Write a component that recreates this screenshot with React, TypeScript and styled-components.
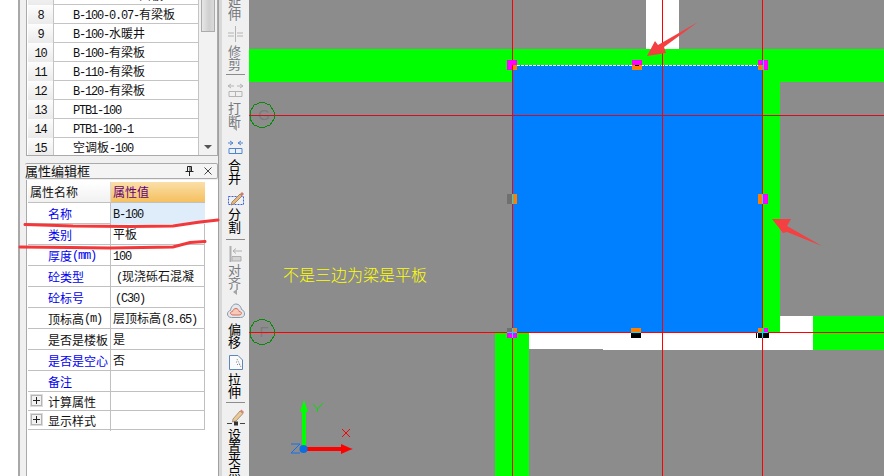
import React from "react";
import styled, { createGlobalStyle } from "styled-components";

const GlobalStyle = createGlobalStyle`
  html, body {
    margin: 0;
    padding: 0;
    background: #fff;
  }
`;

const CJK = `"Noto Sans CJK SC", "Liberation Sans", sans-serif`;

const Page = styled.div`
  position: relative;
  display: flex;
  width: 884px;
  height: 476px;
  overflow: hidden;
  background: #fff;
  font-family: ${CJK};
  font-size: 12px;
  color: #111;
`;

const Gutter = styled.div`
  width: 18px;
  flex: none;
`;

const Panel = styled.div`
  width: 201px;
  flex: none;
  box-sizing: border-box;
  display: flex;
  flex-direction: column;
  padding-left: 5px;
  background: #f0f0f0;
  border-left: 2px solid #a8a8a8;
  border-right: 1px solid #a0a0a0;
`;

const ListBox = styled.div`
  height: 156px;
  flex: none;
  box-sizing: border-box;
  margin-left: 1px;
  padding-left: 1px;
  display: flex;
  overflow: hidden;
  background: #fff;
  border-left: 1px solid #aaa;
  border-right: 1px solid #aaa;
  border-bottom: 1px solid #aaa;
`;

const ListRows = styled.div`
  flex: 1;
  margin-top: -14px;
`;

const ListRow = styled.div`
  display: grid;
  grid-template-columns: 26px 1fr;
  height: 19px;
  box-sizing: border-box;
  border-bottom: 1px solid #c4c4c4;
  border-right: 1px solid #c4c4c4;
  line-height: 18px;
`;

const RowNumber = styled.div`
  text-align: center;
  background: linear-gradient(#fdfdfd, #e9e9e9);
  border-right: 1px solid #c4c4c4;
`;

const RowName = styled.div`
  padding-left: 19px;
  white-space: nowrap;
`;

const Scrollbar = styled.div`
  position: relative;
  width: 18px;
  flex: none;
  background: #f2f2f2;
`;

const ScrollThumb = styled.div`
  width: 14px;
  height: 32px;
  margin-left: 2px;
  box-sizing: border-box;
  background: linear-gradient(90deg, #e6e6e6, #cfcfcf 60%, #dadada);
  border: 1px solid #ababab;
  border-top: none;
`;

const ScrollArrow = styled.div`
  position: absolute;
  left: 5px;
  bottom: 6px;
  width: 0;
  height: 0;
  border-left: 4px solid transparent;
  border-right: 4px solid transparent;
  border-top: 4px solid #555;
`;

const TitleBar = styled.div`
  height: 16px;
  flex: none;
  box-sizing: border-box;
  margin-top: 7px;
  display: flex;
  align-items: center;
  justify-content: space-between;
  padding-right: 5px;
  background: #f4f4f4;
  border: 1px solid #aaa;
  border-left: none;
  border-radius: 2px;
  font-size: 13px;
  line-height: 14px;
`;

const TitleIcons = styled.div`
  display: flex;
  align-items: center;
  gap: 10px;
`;

const PropertyBox = styled.div`
  flex: 1;
  margin-top: 1px;
  margin-left: 1px;
  padding: 2px 0 0 1px;
  background: #fff;
  border-left: 1px solid #aaa;
`;

const PropertyTable = styled.div`
  width: 177px;
`;

const PropertyRow = styled.div<{ $height?: number }>`
  display: grid;
  grid-template-columns: 83px 94px;
  height: ${(p) => p.$height ?? 21}px;
  box-sizing: border-box;
  border-bottom: 1px solid #c0c0c0;
  border-right: 1px solid #c0c0c0;
  line-height: 20px;
`;

const HeaderName = styled.div`
  padding-left: 2px;
  background: linear-gradient(#fff, #f1f1f1);
  border-right: 1px solid #d8d8d8;
`;

const HeaderValue = styled.div`
  padding-left: 2px;
  background: linear-gradient(#fbdfa9, #f5c05f);
  color: #64007c;
`;

const NameCell = styled.div<{ $link?: boolean; $group?: boolean }>`
  display: flex;
  align-items: center;
  padding: ${(p) => (p.$group ? 0 : 1)}px 0 0 20px;
  position: relative;
  white-space: nowrap;
  color: ${(p) => (p.$link ? "#0000f0" : "#111")};
  border-right: 1px solid #c0c0c0;
`;

const ValueCell = styled.div<{ $selected?: boolean; $indent?: number }>`
  padding-left: ${(p) => p.$indent ?? 2}px;
  white-space: nowrap;
  overflow: hidden;
  background: ${(p) => (p.$selected ? "#dfedfb" : "transparent")};
`;

const PlusBox = styled.div`
  position: absolute;
  left: 3px;
  top: 3px;
  width: 11px;
  height: 11px;
  box-sizing: border-box;
  display: flex;
  align-items: center;
  justify-content: center;
  background: #f2f2f2;
  border: 1px solid #b4b4b4;
  outline: 1px solid #dcdcdc;
`;

const Divider = styled.div`
  width: 3px;
  flex: none;
  background: #d8d8d8;
`;

const Toolbar = styled.div`
  width: 27px;
  flex: none;
  display: flex;
  flex-direction: column;
  align-items: center;
  background: #f0f0f0;
  overflow: hidden;
`;

const ToolButton = styled.div<{ $pad: number; $gap: number; $off?: boolean; $first?: boolean }>`
  flex: none;
  display: flex;
  flex-direction: column;
  align-items: center;
  margin-top: ${(p) => (p.$first ? -6 : 0)}px;
  padding-top: ${(p) => p.$pad}px;
  gap: ${(p) => p.$gap}px;
  color: ${(p) => (p.$off ? "#76797e" : "#000")};
`;

const ToolLabel = styled.div<{ $pitch?: number }>`
  width: 13px;
  margin-right: 2px;
  font-size: 13px;
  line-height: ${(p) => p.$pitch ?? 13}px;
  text-align: center;
  word-break: break-all;
`;

const ToolSeparator = styled.div<{ $top: number }>`
  flex: none;
  width: 19px;
  height: 1px;
  margin-top: ${(p) => p.$top}px;
  background: #8c8c8c;
`;

const MoreArrow = styled.div<{ $lift?: number }>`
  flex: none;
  width: 0;
  height: 0;
  margin-top: ${(p) => -(p.$lift ?? 0)}px;
  margin-right: 2px;
  border-top: 3px solid transparent;
  border-bottom: 3px solid transparent;
  border-right: 4px solid #a4a4a4;
`;

const Canvas = styled.div`
  flex: 1;
  background: #8c8c8c;
  overflow: hidden;
`;

const Drawing = styled.svg`
  display: block;
`;

const CanvasNote = styled.text`
  font-family: ${CJK};
  font-size: 16px;
  font-weight: 300;
  fill: #ffff00;
`;

const AxisLetter = styled.text`
  font-family: "Liberation Sans", sans-serif;
  font-size: 15px;
  fill: #7b7b7b;
  text-anchor: middle;
`;

const Annotations = styled.svg`
  position: absolute;
  left: 0;
  top: 0;
  pointer-events: none;
`;

const Latin = styled.span`
  font-family: "Liberation Mono", monospace;
  font-size: 12px;
  letter-spacing: -1.2px;
`;

// half-width characters look like SimSun in the original, so they get the mono face
const Mixed = ({ text }: { text: string }) => (
  <>
    {text
      .split(/([\x20-\x7e]+)/)
      .filter(Boolean)
      .map((part, i) =>
        /^[\x20-\x7e]/.test(part) ? <Latin key={i}>{part}</Latin> : <span key={i}>{part}</span>
      )}
  </>
);

const listRows = [
  ["7", "B-100-0.05-面板"],
  ["8", "B-100-0.07-有梁板"],
  ["9", "B-100-水暖井"],
  ["10", "B-100-有梁板"],
  ["11", "B-110-有梁板"],
  ["12", "B-120-有梁板"],
  ["13", "PTB1-100"],
  ["14", "PTB1-100-1"],
  ["15", "空调板-100"],
];

type Prop = {
  name: string;
  value?: string;
  link?: boolean;
  selected?: boolean;
  indent?: number;
  group?: boolean;
};

const properties: Prop[] = [
  { name: "名称", value: "B-100", link: true, selected: true },
  { name: "类别", value: "平板", link: true },
  { name: "厚度(mm)", value: "100", link: true },
  { name: "砼类型", value: "(现浇砾石混凝", link: true, indent: 5 },
  { name: "砼标号", value: "(C30)", link: true, indent: 4 },
  { name: "顶标高(m)", value: "层顶标高(8.65)" },
  { name: "是否是楼板", value: "是" },
  { name: "是否是空心", value: "否", link: true },
  { name: "备注", link: true },
  { name: "计算属性", group: true },
  { name: "显示样式", group: true },
];

const TrimIcon = () => (
  <svg width="17" height="16" viewBox="0 0 17 16" fill="none" stroke="#b4b4b4">
    <path d="M8.5 0V16M1 7H7M1 10H7M10 7H16M10 10H16" />
  </svg>
);

const BreakIcon = () => (
  <svg width="17" height="14" viewBox="0 0 17 14" fill="none" stroke="#b4b4b4">
    <path d="M1 3H7M10 3H16M1 3L4 1M1 3L4 5M16 3L13 1M16 3L13 5" />
    <path d="M2 8.5H15V13.5H2ZM8.5 8.5V13.5" />
  </svg>
);

const MergeIcon = () => (
  <svg width="17" height="14" viewBox="0 0 17 14" fill="none" stroke="#4f86d0">
    <path d="M1 3H6M6 3L3 1M6 3L3 5M11 3H16M11 3L14 1M11 3L14 5" />
    <path d="M2 8.5H15V13.5H2ZM8.5 8.5V13.5" />
  </svg>
);

const SplitIcon = () => (
  <svg width="18" height="16" viewBox="0 0 18 16">
    <path d="M1.5 6.5H16.5V14.5H1.5Z" fill="none" stroke="#3a5fe0" strokeDasharray="2 1" />
    <path d="M5 12L13 4L15 6L7 14L4 15Z" fill="#e8b878" stroke="#8c7a66" strokeWidth="0.8" />
    <path d="M13 4L15 2L17 4L15 6Z" fill="#cf7a70" />
  </svg>
);

const AlignIcon = () => (
  <svg width="17" height="18" viewBox="0 0 17 18" fill="none" stroke="#b0b0b0">
    <path d="M3.5 1V17" strokeWidth="2" />
    <path d="M6 6H15M6 6L9 3.5M6 6L9 8.5" />
    <path d="M5 11.5H14V16H5Z" fill="#d4d4d4" />
  </svg>
);

const OffsetIcon = () => (
  <svg width="18" height="16" viewBox="0 0 18 16">
    <path
      d="M4.5 14.5C1.5 14.5 .5 12.5 .5 11C.5 9 2 7.5 3.5 7.5C4 3.5 6.5 1 9 1C12 1 14 3.5 14.5 6.5C16.5 7 17.5 9 17.5 11C17.5 13 16 14.5 13.5 14.5Z"
      fill="#e4e8ee"
      stroke="#8c98a8"
    />
    <path
      d="M6 12C4.5 12 3.5 11 3.5 10C3.5 9 4.5 8.5 5.5 8.5C6 6.5 7.5 5.5 9 5.5C10.5 5.5 11.8 6.8 12 8.5C13.5 8.5 14.5 9.3 14.5 10.3C14.5 11.3 13.5 12 12 12Z"
      fill="#f6c9b8"
      stroke="#d8705a"
    />
  </svg>
);

const StretchIcon = () => (
  <svg width="18" height="18" viewBox="0 0 18 18" fill="none" stroke="#5e86b8">
    <path d="M2.5 2.5H11L15.5 7V16.5H2.5Z" fill="#f8fafc" />
    <path d="M10 6L14 14M9 9H11M10 11.5H13" stroke="#8a8a8a" strokeDasharray="1 1" />
  </svg>
);

const GripIcon = () => (
  <svg width="20" height="17" viewBox="0 0 20 17">
    <path d="M7 10L14 2L17 4.5L10 12L6.5 13Z" fill="#ecc894" stroke="#948472" strokeWidth="0.8" />
    <path d="M14 2L15.5 .5L18 3L17 4.5Z" fill="#d8857a" />
    <path d="M1 14.5H6M14 14.5H19" stroke="#444" />
    <rect x="8" y="12.5" width="4" height="4" fill="#333" />
  </svg>
);

const PinIcon = () => (
  <svg width="9" height="10" viewBox="0 0 9 10" fill="none" stroke="#222">
    <path d="M2.5 .5H6.5V5.5H2.5ZM5 1V5.5M.5 5.5H8.5M4.5 6V10" />
  </svg>
);

const CloseIcon = () => (
  <svg width="8" height="8" viewBox="0 0 8 8" fill="none" stroke="#444">
    <path d="M.5 .5L7.5 7.5M7.5 .5L.5 7.5" />
  </svg>
);

const PlusIcon = () => (
  <svg width="7" height="7" viewBox="0 0 7 7" fill="none" stroke="#222">
    <path d="M0 3.5H7M3.5 0V7" />
  </svg>
);

// grip handle, drawn as a list of coloured pieces
type Piece = [number, number, number, number, string];
const handles: Piece[][] = [
  // top left
  [
    [507, 60, 5, 10, "#ff00ff"],
    [512, 60, 5, 5, "#ff00ff"],
    [513, 65, 4, 5, "#ff8000"],
  ],
  // top middle
  [
    [632, 60, 10, 5, "#ff00ff"],
    [632, 65, 10, 5, "#ff8000"],
    [635, 65, 4, 1, "#000"],
  ],
  // top right
  [
    [758, 60, 5, 5, "#ff00ff"],
    [758, 65, 5, 5, "#ff8000"],
    [763, 60, 1, 10, "#00e0ff"],
    [764, 60, 4, 10, "#ff00ff"],
  ],
  // middle left
  [
    [507, 194, 5, 10, "#707070"],
    [512, 194, 1, 10, "#00e0ff"],
    [513, 194, 4, 10, "#ff8000"],
  ],
  // middle right
  [
    [758, 194, 4, 10, "#ff8000"],
    [762, 194, 1, 10, "#00e0ff"],
    [763, 194, 5, 10, "#ff00ff"],
  ],
  // bottom left
  [
    [507, 328, 5, 4, "#707070"],
    [513, 328, 4, 4, "#ff8000"],
    [507, 333, 5, 5, "#ff00ff"],
    [513, 333, 4, 5, "#ff00ff"],
    [507, 332, 10, 1, "#00e0ff"],
    [512, 328, 1, 10, "#00e0ff"],
  ],
  // bottom middle
  [
    [631, 328, 10, 4, "#ff8000"],
    [631, 332, 10, 1, "#00e0ff"],
    [631, 333, 10, 5, "#000"],
  ],
  // bottom right
  [
    [756, 333, 1, 5, "#000"],
    [768, 333, 1, 5, "#000"],
    [758, 333, 10, 5, "#000"],
    [758, 328, 5, 4, "#ff8000"],
    [764, 328, 4, 4, "#ff00ff"],
    [758, 332, 10, 1, "#00e0ff"],
    [762, 328, 1, 10, "#00e0ff"],
  ],
];

const AxisBubble = ({ y, letter }: { y: number; letter: string }) => (
  <g>
    <polygon
      points={`262,${y - 13} 270,${y - 10} 274,${y - 3} 274,${y + 4} 270,${y + 10} 262,${y + 13} 254,${y + 10} 250,${y + 4} 250,${y - 3} 254,${y - 10}`}
      fill="none"
      stroke="#0a8a0a"
    />
    <AxisLetter x="264" y={y + 5}>
      {letter}
    </AxisLetter>
  </g>
);

const Plan = () => (
  <Drawing width="635" height="476" viewBox="249 0 635 476" shapeRendering="crispEdges">
    <rect x="646" y="0" width="33" height="49" fill="#fff" />
    <rect x="249" y="49" width="635" height="33" fill="#00ff00" />
    <rect x="763" y="49" width="17" height="283" fill="#00ff00" />
    <rect x="529" y="332" width="74" height="17" fill="#fff" />
    <rect x="603" y="332" width="210" height="18" fill="#fff" />
    <rect x="780" y="316" width="33" height="16" fill="#fff" />
    <rect x="813" y="316" width="71" height="34" fill="#00ff00" />
    <rect x="495" y="333" width="34" height="143" fill="#00ff00" />
    <rect x="513" y="65" width="250" height="267" fill="#0080ff" />
    <path d="M517 65.5H758" stroke="#fff" strokeDasharray="3 1" />
    <AxisBubble y={115} letter="G" />
    <AxisBubble y={332} letter="F" />
    <rect x="249" y="115" width="635" height="1" fill="#d01020" />
    <rect x="249" y="332" width="635" height="1" fill="#ff0000" />
    <rect x="512" y="0" width="1" height="476" fill="#ff0000" />
    <rect x="662" y="0" width="1" height="476" fill="#ff0000" />
    <rect x="762" y="0" width="1" height="476" fill="#ff0000" />
    {handles.map((pieces, h) => (
      <g key={h}>
        {pieces.map(([x, y, w, ht, fill], i) => (
          <rect key={i} x={x} y={y} width={w} height={ht} fill={fill} />
        ))}
      </g>
    ))}
    <CanvasNote x="283" y="281">
      不是三边为梁是平板
    </CanvasNote>
    {/* coordinate marker */}
    <g shapeRendering="auto">
      <path d="M302 449V412H300L304 400L308 412H306V449Z" fill="#00ff00" />
      <path d="M307 447H341V444L350 448L353 449L350 450L341 454V451H307Z" fill="#ff0000" />
      <circle cx="303.5" cy="449" r="4" fill="#0a6ee0" />
      <path d="M313 404L317.500 409L323 403M317.500 409V412" fill="none" stroke="#00e000" />
      <path d="M342 429L350 437M350 429L342 437" fill="none" stroke="#ff0000" />
      <path d="M291 444H300L291 453H300" fill="none" stroke="#1070f0" />
    </g>
  </Drawing>
);

const App = () => {
  return (
    <Page>
      <GlobalStyle />
      <Gutter />
      <Panel>
        <ListBox>
          <ListRows>
            {listRows.map(([num, name]) => (
              <ListRow key={num}>
                <RowNumber>
                  <Mixed text={num} />
                </RowNumber>
                <RowName>
                  <Mixed text={name} />
                </RowName>
              </ListRow>
            ))}
          </ListRows>
          <Scrollbar>
            <ScrollThumb />
            <ScrollArrow />
          </Scrollbar>
        </ListBox>
        <TitleBar>
          属性编辑框
          <TitleIcons>
            <PinIcon />
            <CloseIcon />
          </TitleIcons>
        </TitleBar>
        <PropertyBox>
          <PropertyTable>
            <PropertyRow>
              <HeaderName>属性名称</HeaderName>
              <HeaderValue>属性值</HeaderValue>
            </PropertyRow>
            {properties.map((p) => (
              <PropertyRow key={p.name} $height={p.group ? 19 : 21}>
                <NameCell $link={p.link} $group={p.group}>
                  {p.group && (
                    <PlusBox>
                      <PlusIcon />
                    </PlusBox>
                  )}
                  <Mixed text={p.name} />
                </NameCell>
                <ValueCell $selected={p.selected} $indent={p.indent}>
                  {p.value && <Mixed text={p.value} />}
                </ValueCell>
              </PropertyRow>
            ))}
          </PropertyTable>
        </PropertyBox>
      </Panel>
      <Divider />
      <Toolbar>
        <ToolButton $first $off $pad={0} $gap={0}>
          <ToolLabel>延伸</ToolLabel>
        </ToolButton>
        <ToolButton $off $pad={6} $gap={2}>
          <TrimIcon />
          <ToolLabel>修剪</ToolLabel>
        </ToolButton>
        <ToolSeparator $top={4} />
        <ToolButton $off $pad={8} $gap={4}>
          <BreakIcon />
          <ToolLabel>打断</ToolLabel>
          <MoreArrow $lift={6} />
        </ToolButton>
        <ToolButton $pad={9} $gap={4}>
          <MergeIcon />
          <ToolLabel>合并</ToolLabel>
        </ToolButton>
        <ToolButton $pad={6} $gap={1}>
          <SplitIcon />
          <ToolLabel>分割</ToolLabel>
        </ToolButton>
        <ToolSeparator $top={6} />
        <ToolButton $off $pad={5} $gap={0}>
          <AlignIcon />
          <ToolLabel>对齐</ToolLabel>
          <MoreArrow />
        </ToolButton>
        <ToolButton $pad={8} $gap={3}>
          <OffsetIcon />
          <ToolLabel>偏移</ToolLabel>
        </ToolButton>
        <ToolButton $pad={5} $gap={1}>
          <StretchIcon />
          <ToolLabel>拉伸</ToolLabel>
        </ToolButton>
        <ToolSeparator $top={4} />
        <ToolButton $pad={6} $gap={2}>
          <GripIcon />
          <ToolLabel $pitch={12}>设置夹点</ToolLabel>
        </ToolButton>
      </Toolbar>
      <Canvas>
        <Plan />
      </Canvas>
      <Annotations width="884" height="476" viewBox="0 0 884 476">
        <path
          d="M25 224.500L73 226L130 226.500L173 226L200 222L218 220"
          fill="none"
          stroke="#f2383a"
          strokeWidth="3"
          strokeLinecap="round"
        />
        <path
          d="M20 247L70 247.500L110 248L173 247L190 242.500L205 241.500"
          fill="none"
          stroke="#f2383a"
          strokeWidth="3"
          strokeLinecap="round"
        />
        <polygon points="647,56 655,41 658,45 698,22 664,47 666,53" fill="#f44040" />
        <polygon points="772,219 791,219 787,226 822,246 787,232 783,233" fill="#f44040" />
      </Annotations>
    </Page>
  );
};

export default App;
